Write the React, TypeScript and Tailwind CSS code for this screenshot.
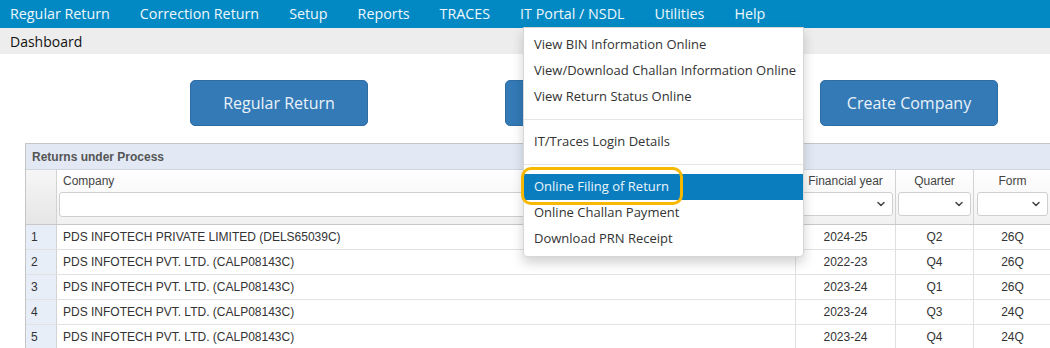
import { ChevronDown } from 'lucide-react';

const NAV_ITEMS = ['Regular Return', 'Correction Return', 'Setup', 'Reports', 'TRACES', 'IT Portal / NSDL', 'Utilities', 'Help'];

const ROWS = [
    { n: 1, company: 'PDS INFOTECH PRIVATE LIMITED (DELS65039C)', fy: '2024-25', q: 'Q2', form: '26Q' },
    { n: 2, company: 'PDS INFOTECH PVT. LTD. (CALP08143C)', fy: '2022-23', q: 'Q4', form: '26Q' },
    { n: 3, company: 'PDS INFOTECH PVT. LTD. (CALP08143C)', fy: '2023-24', q: 'Q1', form: '26Q' },
    { n: 4, company: 'PDS INFOTECH PVT. LTD. (CALP08143C)', fy: '2023-24', q: 'Q3', form: '24Q' },
    { n: 5, company: 'PDS INFOTECH PVT. LTD. (CALP08143C)', fy: '2023-24', q: 'Q4', form: '24Q' },
];

function SelectBox({ className }: { className: string }) {
    return (
        <div className={`h-[24px] bg-white border border-[#cfcfcf] rounded-[3px] flex items-center justify-end pr-[5px] ${className}`}>
            <ChevronDown size={12} strokeWidth={3} className="text-[#444]" />
        </div>
    );
}

function MenuItem({ label, active }: { label: string; active?: boolean }) {
    return (
        <div className={`h-[26px] flex items-center px-[10px] text-[13px] whitespace-nowrap ${active ? 'bg-[#0a7dbf] text-[#eaf5fb]' : 'text-[#333]'}`}>
            {label}
        </div>
    );
}

export default function App() {
    return (
        <div className="relative w-[1050px] h-[348px] overflow-hidden bg-white font-['Open_Sans','Noto_Sans',sans-serif]">
            <nav className="h-[28px] bg-[#0289c3] flex items-center gap-[30px] pl-[10px] text-[14.3px] text-[#eef7fc]">
                {NAV_ITEMS.map(item => (
                    <span key={item} className="whitespace-nowrap">{item}</span>
                ))}
            </nav>
            <div className="h-[26px] bg-[#ededed] flex items-center pl-[10px] text-[14px] text-[#111]">
                Dashboard
            </div>

            <div className="flex gap-[137px] pl-[190px] mt-[26px]">
                <button className="w-[178px] h-[46px] rounded-[5px] bg-[#337ab7] border border-[#2e6da4] text-[16px] text-[#eaf2f9]">Regular Return</button>
                <button className="w-[178px] h-[46px] rounded-[5px] bg-[#337ab7] border border-[#2e6da4]" aria-label="Correction Return" />
                <button className="w-[178px] h-[46px] rounded-[5px] bg-[#337ab7] border border-[#2e6da4] text-[16px] text-[#eaf2f9]">Create Company</button>
            </div>

            <div className="ml-[25px] mt-[17px] w-[1040px] border-l border-t border-[#c5c5c5] font-['Liberation_Sans',Arial,sans-serif] text-[12px] text-[#333]">
                <div className="h-[26px] bg-[#e2e9f4] border-b border-[#d0d6de] flex items-center pl-[6px] font-bold text-[#555]">
                    Returns under Process
                </div>
                <div className="flex h-[55px] border-b border-[#c8c8c8] bg-gradient-to-b from-white to-[#f1f1f1]">
                    <div className="w-[31px] shrink-0 border-r border-[#d3d3d3] bg-gradient-to-b from-[#f6f6f6] to-[#e6e6e6]" />
                    <div className="w-[739px] shrink-0 border-r border-[#d3d3d3] pl-[2px] pr-[4px]">
                        <div className="h-[22px] flex items-center pl-[4px] text-[#444]">Company</div>
                        <div className="h-[25px] bg-white border border-[#cfcfcf] rounded-[3px]" />
                    </div>
                    <div className="w-[100px] shrink-0 border-r border-[#d3d3d3] px-[2px]">
                        <div className="h-[22px] flex items-center justify-center text-[#444]">Financial year</div>
                        <SelectBox className="w-full" />
                    </div>
                    <div className="w-[78px] shrink-0 border-r border-[#d3d3d3] px-[2px]">
                        <div className="h-[22px] flex items-center justify-center text-[#444]">Quarter</div>
                        <SelectBox className="w-full" />
                    </div>
                    <div className="w-[77px] shrink-0 px-[3px]">
                        <div className="h-[22px] flex items-center justify-center text-[#444]">Form</div>
                        <SelectBox className="w-full" />
                    </div>
                </div>
                {ROWS.map(r => (
                    <div key={r.n} className="flex h-[25px] border-b border-[#e2e2e2]">
                        <div className="w-[31px] shrink-0 bg-[#e8eef8] border-r border-[#d3d3d3] flex items-center pl-[5px]">{r.n}</div>
                        <div className="w-[739px] shrink-0 border-r border-[#e0e0e0] flex items-center pl-[6px]">{r.company}</div>
                        <div className="w-[100px] shrink-0 border-r border-[#e0e0e0] flex items-center justify-center">{r.fy}</div>
                        <div className="w-[78px] shrink-0 border-r border-[#e0e0e0] flex items-center justify-center">{r.q}</div>
                        <div className="w-[77px] shrink-0 flex items-center justify-center">{r.form}</div>
                    </div>
                ))}
            </div>

            <div className="absolute left-[523px] top-[27px] w-[281px] bg-white border border-[#d6d6d6] rounded-b-[4px] shadow-[0_6px_12px_rgba(0,0,0,0.18)] py-[4px]">
                <MenuItem label="View BIN Information Online" />
                <MenuItem label="View/Download Challan Information Online" />
                <MenuItem label="View Return Status Online" />
                <div className="my-[9px] h-px bg-[#e5e5e5]" />
                <MenuItem label="IT/Traces Login Details" />
                <div className="my-[9px] h-px bg-[#e5e5e5]" />
                <MenuItem label="Online Filing of Return" active />
                <MenuItem label="Online Challan Payment" />
                <MenuItem label="Download PRN Receipt" />
            </div>

            <div className="absolute left-[521px] top-[167px] w-[162px] h-[38px] border-[3px] border-[#f6b900] rounded-[10px]" />
        </div>
    );
}
